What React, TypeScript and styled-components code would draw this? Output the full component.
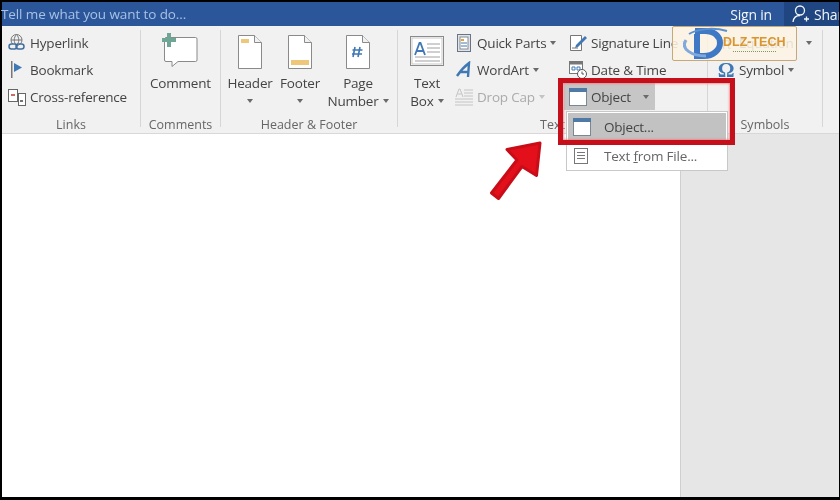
import React from "react";
import styled, { createGlobalStyle } from "styled-components";

const GlobalStyle = createGlobalStyle`
  html, body {
    margin: 0;
    padding: 0;
    background: #000;
  }
  * {
    box-sizing: border-box;
  }
`;

const Frame = styled.div`
  position: relative;
  width: 840px;
  height: 500px;
  padding: 2px 1px 3px 2px;
  background: #000;
  display: flex;
  flex-direction: column;
  overflow: hidden;
  font-family: "Open Sans", "Noto Sans", sans-serif;
  font-size: 13.5px;
  letter-spacing: -0.2px;
  color: #444;
  filter: blur(0.35px);
`;

const TitleBar = styled.header`
  height: 24px;
  background: #2b579a;
  display: flex;
  align-items: center;
  flex-shrink: 0;
`;

const TellMe = styled.span`
  flex: 1;
  color: #a9c0e4;
  font-size: 13.5px;
  letter-spacing: -0.1px;
  margin-left: -1px;
`;

const SignIn = styled.span`
  color: #f2f5fa;
  font-size: 14px;
  margin-right: 12px;
`;

const ShareBox = styled.div`
  width: 55px;
  height: 100%;
  background: #1f4680;
  color: #f2f5fa;
  display: flex;
  align-items: center;
  gap: 4px;
  padding-left: 8px;
  overflow: hidden;
  font-size: 14px;
  white-space: nowrap;

  svg {
    flex-shrink: 0;
  }
`;

const Ribbon = styled.section`
  height: 108px;
  background: #f1f1f1;
  border-bottom: 1px solid #d8d8d8;
  display: flex;
  flex-shrink: 0;
`;

const Group = styled.div<{ $width: number }>`
  width: ${(p) => p.$width}px;
  flex-shrink: 0;
  display: flex;
  flex-direction: column;
`;

const GroupBody = styled.div<{ $pad?: number; $gap?: number }>`
  height: 90px;
  padding: 3px 0 0 ${(p) => p.$pad ?? 0}px;
  display: flex;
  gap: ${(p) => p.$gap ?? 0}px;
`;

const GroupLabel = styled.div`
  height: 17px;
  line-height: 17px;
  text-align: center;
  font-size: 12.5px;
  letter-spacing: 0;
  color: #666;
  white-space: nowrap;
`;

const Divider = styled.div`
  width: 1px;
  margin: 4px 0 6px;
  background: #d6d6d6;
  flex-shrink: 0;
`;

const Column = styled.div<{ $width?: number }>`
  width: ${(p) => (p.$width ? `${p.$width}px` : "auto")};
  display: flex;
  flex-direction: column;
  flex-shrink: 0;
`;

const Row = styled.div<{ $disabled?: boolean }>`
  height: 27px;
  display: flex;
  align-items: center;
  gap: 3px;
  white-space: nowrap;
  color: ${(p) => (p.$disabled ? "#ababab" : "#444")};
`;

const ActiveRow = styled(Row)`
  width: 91px;
  margin-left: -4px;
  padding-left: 4px;
  background: #c6c6c6;
`;

const IconBox = styled.span`
  width: 20px;
  height: 20px;
  display: flex;
  align-items: center;
  justify-content: center;
  flex-shrink: 0;
`;

const OmegaGlyph = styled.span`
  font-family: "Liberation Serif", serif;
  font-size: 21px;
  font-weight: 700;
  line-height: 20px;
  color: #3f78b4;
`;

const PiGlyph = styled.span`
  font-size: 16px;
  color: #666;
`;

const BigButton = styled.div<{ $width: number }>`
  width: ${(p) => p.$width}px;
  display: flex;
  flex-direction: column;
  align-items: center;
  flex-shrink: 0;
`;

const BigIcon = styled.div<{ $top?: number }>`
  height: 45px;
  padding-top: ${(p) => p.$top ?? 6}px;
  display: flex;
  justify-content: center;
`;

const BigText = styled.div`
  height: 18px;
  line-height: 18px;
  display: flex;
  align-items: center;
  justify-content: center;
  white-space: nowrap;
`;

const Caret = styled.i<{ $gap?: number; $light?: boolean }>`
  display: inline-block;
  width: 0;
  height: 0;
  margin-left: ${(p) => p.$gap ?? 4}px;
  border-left: 3.5px solid transparent;
  border-right: 3.5px solid transparent;
  border-top: 4px solid ${(p) => (p.$light ? "#c4c4c4" : "#6a6a6a")};
`;

const Workspace = styled.main`
  flex: 1;
  display: flex;
  min-height: 0;
`;

const Page = styled.div`
  width: 678px;
  background: #fff;
`;

const Gutter = styled.div`
  flex: 1;
  background: #e6e6e6;
  border-left: 1px solid #cfcfcf;
`;

const Menu = styled.div`
  position: absolute;
  left: 566px;
  top: 111px;
  width: 162px;
  height: 60px;
  background: #fff;
  border: 1px solid #c8c8c8;
  padding: 1px;
`;

const MenuItem = styled.div<{ $active?: boolean }>`
  height: 28px;
  margin-bottom: 1px;
  padding-left: 5px;
  display: flex;
  align-items: center;
  background: ${(p) => (p.$active ? "#c2c2c2" : "transparent")};
  color: ${(p) => (p.$active ? "#444" : "#666")};
  white-space: nowrap;
`;

const MenuText = styled.span<{ $gap: number }>`
  margin-left: ${(p) => p.$gap}px;
`;

const RedFrame = styled.div`
  position: absolute;
  left: 558px;
  top: 78px;
  width: 177px;
  height: 67px;
  border: 5px solid #c5101c;
  box-shadow: inset 0 0 2px 1px rgba(240, 120, 120, 0.7);
`;

const ArrowMark = styled.svg`
  position: absolute;
  left: 484px;
  top: 134px;
`;

const Logo = styled.div`
  position: absolute;
  left: 672px;
  top: 26px;
  width: 125px;
  height: 35px;
  background: rgba(252, 242, 226, 0.88);
  border: 1px solid #c9a878;
  border-radius: 2px;
`;

const LogoMark = styled.svg`
  position: absolute;
  left: 10px;
  top: 0;
`;

const LogoText = styled.span`
  position: absolute;
  left: 50px;
  top: 7px;
  font-family: "Liberation Sans", sans-serif;
  font-size: 12.5px;
  line-height: 16px;
  font-weight: 700;
  color: #d9952f;
  letter-spacing: 0;
  white-space: nowrap;
`;

const LogoRule = styled.i`
  position: absolute;
  left: 60px;
  top: 24px;
  width: 43px;
  border-top: 1px dotted #7d9a5a;
`;

const Hyperlink = () => (
  <svg width="20" height="20" viewBox="0 0 20 20" fill="none">
    <circle cx="9.5" cy="7" r="5.5" stroke="#777" />
    <path d="M4 7h11M9.5 1.5c-3 3-3 8 0 11M9.5 1.5c3 3 3 8 0 11" stroke="#777" />
    <rect x="2" y="11" width="8" height="5" rx="2.5" stroke="#3f6f9f" strokeWidth="1.5" fill="#f1f1f1" />
    <rect x="9" y="11" width="8" height="5" rx="2.5" stroke="#3f6f9f" strokeWidth="1.5" />
  </svg>
);

const Bookmark = () => (
  <svg width="20" height="20" viewBox="0 0 20 20">
    <rect x="4" y="1" width="1.5" height="17" fill="#777" />
    <path d="M7 3l8 4.5L7 12z" fill="#3f78b4" />
  </svg>
);

const CrossRef = () => (
  <svg width="20" height="20" viewBox="0 0 20 20" fill="#fff">
    <rect x="1.5" y="2.5" width="9" height="12" stroke="#666" />
    <rect x="11.5" y="6.5" width="7" height="12" stroke="#666" />
    <path d="M4 8h4" stroke="#c0392b" strokeWidth="1.5" />
    <path d="M13 14h3" stroke="#444" strokeWidth="1.5" />
  </svg>
);

const CommentIcon = () => (
  <svg width="38" height="36" viewBox="0 0 38 36">
    <path d="M3.500 4.500h30a1.500 1.500 0 0 1 1.500 1.500v21a1.500 1.500 0 0 1-1.500 1.500H16l-6 5v-5H4a1.500 1.500 0 0 1-1.500-1.500V6z" fill="#fff" stroke="#8a8a8a" />
    <path d="M5 0h4v5h5v4H9v5H5V9H0V5h5z" fill="#6fa595" />
  </svg>
);

const PageIcon = ({ children }: { children?: React.ReactNode }) => (
  <svg width="26" height="34" viewBox="0 0 26 34">
    <path d="M1.500.5h16l7 7v26h-23z" fill="#fff" stroke="#8a8a8a" />
    <path d="M17.500.5v7h7" fill="#f1f1f1" stroke="#8a8a8a" />
    {children}
  </svg>
);

const TextBoxIcon = () => (
  <svg width="34" height="30" viewBox="0 0 34 30" fill="none">
    <rect x=".5" y=".5" width="33" height="29" fill="#fff" stroke="#8a8a8a" />
    <rect x="2" y="2" width="30" height="26" stroke="#c9c9c9" />
    <path d="M5 19l4.500-12h1l4.500 12M7 15h6" stroke="#3f78b4" strokeWidth="1.800" />
    <path d="M17 8h13M17 12h13M17 16h13M5 21h25M5 25h25" stroke="#a0a0a0" />
  </svg>
);

const QuickParts = () => (
  <svg width="18" height="18" viewBox="0 0 18 18">
    <rect x="2.500" y=".5" width="13" height="17" fill="#dde4ee" stroke="#6a7485" />
    <rect x="5" y="3" width="8" height="12" fill="#fff" stroke="#8a8a8a" />
    <rect x="6" y="5" width="3" height="2" fill="#e0a43a" />
    <path d="M6 9h6M6 12h6" stroke="#3f78b4" />
  </svg>
);

const WordArtIcon = () => (
  <svg width="18" height="18" viewBox="0 0 18 18" fill="none">
    <path d="M2 15C6 9 10 5 14 2l-1 14M5 11h9" stroke="#3f78b4" strokeWidth="2.400" />
  </svg>
);

const DropCapIcon = () => (
  <svg width="20" height="20" viewBox="0 0 20 20" fill="none" stroke="#c4c4c4">
    <path d="M2 10l3-8h1l3 8M3.500 7h4" />
    <path d="M10 3h9M10 6h9M10 9h9M1 12h18M1 15h18M1 18h18" />
  </svg>
);

const SignatureIcon = () => (
  <svg width="20" height="20" viewBox="0 0 20 20" fill="none">
    <path d="M2.500 2.500h11v15h-11z" fill="#fff" stroke="#777" />
    <path d="M8 12L17 3l2 2-9 9-3 1z" fill="#3f78b4" />
    <path d="M4 15h6" stroke="#777" />
  </svg>
);

const DateIcon = () => (
  <svg width="20" height="20" viewBox="0 0 20 20" fill="none">
    <rect x="1.500" y="1.500" width="13" height="12" fill="#fff" stroke="#777" />
    <rect x="1.500" y="1.500" width="13" height="3" fill="#777" />
    <path d="M4 7h3v3H4zM9 7h3v3H9z" stroke="#3f78b4" />
    <circle cx="14" cy="14" r="4.500" fill="#fff" stroke="#555" />
    <path d="M14 11.500V14h2" stroke="#555" />
  </svg>
);

const WindowIcon = () => (
  <svg width="18" height="18" viewBox="0 0 18 18">
    <rect x=".5" y=".5" width="17" height="17" fill="#fff" stroke="#7a8794" />
    <rect x="0" y="0" width="18" height="4" fill="#4f7aa6" />
  </svg>
);

const LinesIcon = () => (
  <svg width="16" height="18" viewBox="0 0 16 18" fill="#fff" stroke="#777">
    <rect x="1.500" y="1.500" width="13" height="15" />
    <path d="M4 5.500h8M4 8.500h8M4 11.500h8" />
  </svg>
);

const ShareIcon = () => (
  <svg width="18" height="20" viewBox="0 0 18 20" fill="none" stroke="#f2f5fa" strokeWidth="1.300">
    <circle cx="8" cy="6.500" r="4.500" />
    <path d="M1 18c.5-4 3-6.500 7-6.500M12 15h5M14.500 12.500v5" />
  </svg>
);

export default function App() {
  return (
    <Frame>
      <GlobalStyle />
      <TitleBar>
        <TellMe>Tell me what you want to do...</TellMe>
        <SignIn>Sign in</SignIn>
        <ShareBox>
          <ShareIcon />
          Share
        </ShareBox>
      </TitleBar>

      <Ribbon>
        <Group $width={138}>
          <GroupBody $pad={5}>
            <Column>
              <Row><IconBox><Hyperlink /></IconBox>Hyperlink</Row>
              <Row><IconBox><Bookmark /></IconBox>Bookmark</Row>
              <Row><IconBox><CrossRef /></IconBox>Cross-reference</Row>
            </Column>
          </GroupBody>
          <GroupLabel>Links</GroupLabel>
        </Group>
        <Divider />

        <Group $width={79}>
          <GroupBody>
            <BigButton $width={79}>
              <BigIcon $top={4}><CommentIcon /></BigIcon>
              <BigText>Comment</BigText>
            </BigButton>
          </GroupBody>
          <GroupLabel>Comments</GroupLabel>
        </Group>
        <Divider />

        <Group $width={176}>
          <GroupBody $pad={5} $gap={2}>
            <BigButton $width={48}>
              <BigIcon>
                <PageIcon><rect x="4" y="4" width="8" height="4" fill="#eec77a" /></PageIcon>
              </BigIcon>
              <BigText>Header</BigText>
              <BigText><Caret $gap={0} /></BigText>
            </BigButton>
            <BigButton $width={48}>
              <BigIcon>
                <PageIcon><rect x="4" y="25" width="18" height="5" fill="#eec77a" /></PageIcon>
              </BigIcon>
              <BigText>Footer</BigText>
              <BigText><Caret $gap={0} /></BigText>
            </BigButton>
            <BigButton $width={64}>
              <BigIcon>
                <PageIcon>
                  <path d="M10 12l-2 10M15 12l-2 10M7.500 15h10M7 19h10" stroke="#3f78b4" strokeWidth="1.600" />
                </PageIcon>
              </BigIcon>
              <BigText>Page</BigText>
              <BigText>Number<Caret /></BigText>
            </BigButton>
          </GroupBody>
          <GroupLabel>Header &amp; Footer</GroupLabel>
        </Group>
        <Divider />

        <Group $width={309}>
          <GroupBody $pad={7} $gap={5}>
            <BigButton $width={44}>
              <BigIcon $top={7}><TextBoxIcon /></BigIcon>
              <BigText>Text</BigText>
              <BigText>Box<Caret /></BigText>
            </BigButton>
            <Column $width={109}>
              <Row><IconBox><QuickParts /></IconBox>Quick Parts<Caret $gap={1} /></Row>
              <Row><IconBox><WordArtIcon /></IconBox>WordArt<Caret $gap={1} /></Row>
              <Row $disabled><IconBox><DropCapIcon /></IconBox>Drop Cap<Caret $gap={1} $light /></Row>
            </Column>
            <Column>
              <Row><IconBox><SignatureIcon /></IconBox>Signature Line<Caret $gap={1} /></Row>
              <Row><IconBox><DateIcon /></IconBox>Date &amp; Time</Row>
              <ActiveRow><IconBox><WindowIcon /></IconBox>Object<Caret $gap={9} /></ActiveRow>
            </Column>
          </GroupBody>
          <GroupLabel>Text</GroupLabel>
        </Group>
        <Divider />

        <Group $width={114}>
          <GroupBody $pad={8}>
            <Column>
              <Row><IconBox><PiGlyph>π</PiGlyph></IconBox>Equation<Caret $gap={9} /></Row>
              <Row><IconBox><OmegaGlyph>Ω</OmegaGlyph></IconBox>Symbol<Caret $gap={1} /></Row>
            </Column>
          </GroupBody>
          <GroupLabel>Symbols</GroupLabel>
        </Group>
        <Divider />
      </Ribbon>

      <Workspace>
        <Page />
        <Gutter />
      </Workspace>

      <Menu>
        <MenuItem $active>
          <WindowIcon />
          <MenuText $gap={13}>Object...</MenuText>
        </MenuItem>
        <MenuItem>
          <LinesIcon />
          <MenuText $gap={15}>Text <u>f</u>rom File...</MenuText>
        </MenuItem>
      </Menu>
      <RedFrame />

      <ArrowMark width="64" height="72" viewBox="0 0 64 72">
        <path
          d="M56 9L23 15.500l10 10.500L7.500 59l7 5.500L38 32.500l14.500 9z"
          fill="#e3101c"
          stroke="#c90d18"
          strokeWidth="3"
          strokeLinejoin="round"
        />
      </ArrowMark>

      <Logo>
        <LogoMark width="46" height="33" viewBox="0 0 46 33" fill="none">
          <path d="M12 4h10c9 0 15 5 15 12s-7 13-16 13h-7V7" stroke="#3f78c4" strokeWidth="6" />
          <path d="M3 13c-6 9 6 16 20 16" stroke="#7fa8dc" strokeWidth="3" />
          <path d="M6 7C14 2 30 0 44 4" stroke="#5a90d0" strokeWidth="2" />
        </LogoMark>
        <LogoText>DLZ-TECH</LogoText>
        <LogoRule />
      </Logo>
    </Frame>
  );
}
